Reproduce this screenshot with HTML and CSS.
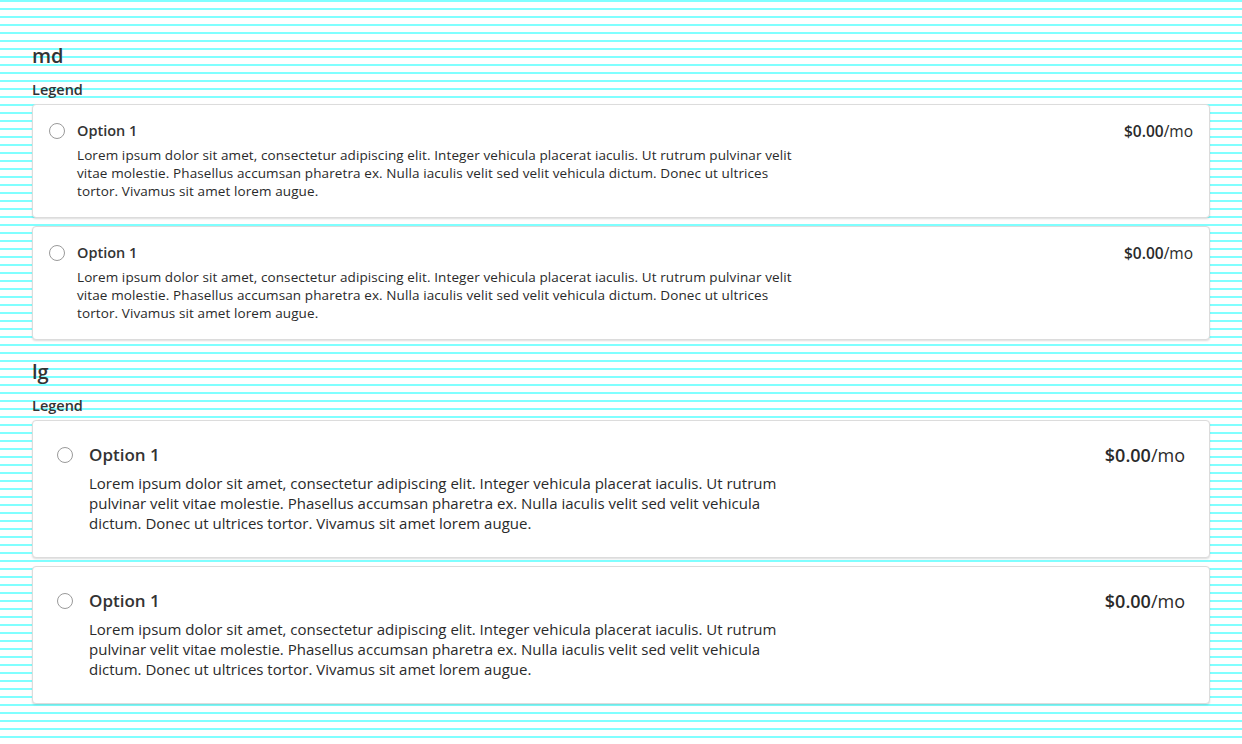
FILE: index.html
```html
<!DOCTYPE html>
<html lang="en">
<head>
<meta charset="utf-8">
<title>Radio cards</title>
<link rel="stylesheet" href="styles.css">
</head>
<body>
<main class="page">
  <section class="group group-md">
    <h2 class="size-title">md</h2>
    <div class="legend">Legend</div>
    <div class="cards">
      <label class="card">
        <span class="radio"></span>
        <span class="body">
          <span class="title">Option 1</span>
          <span class="desc">Lorem ipsum dolor sit amet, consectetur adipiscing elit. Integer vehicula placerat iaculis. Ut rutrum pulvinar velit vitae molestie. Phasellus accumsan pharetra ex. Nulla iaculis velit sed velit vehicula dictum. Donec ut ultrices tortor. Vivamus sit amet lorem augue.</span>
        </span>
        <span class="price"><b>$0.00</b>/mo</span>
      </label>
      <label class="card">
        <span class="radio"></span>
        <span class="body">
          <span class="title">Option 1</span>
          <span class="desc">Lorem ipsum dolor sit amet, consectetur adipiscing elit. Integer vehicula placerat iaculis. Ut rutrum pulvinar velit vitae molestie. Phasellus accumsan pharetra ex. Nulla iaculis velit sed velit vehicula dictum. Donec ut ultrices tortor. Vivamus sit amet lorem augue.</span>
        </span>
        <span class="price"><b>$0.00</b>/mo</span>
      </label>
    </div>
  </section>
  <section class="group group-lg">
    <h2 class="size-title">lg</h2>
    <div class="legend">Legend</div>
    <div class="cards">
      <label class="card">
        <span class="radio"></span>
        <span class="body">
          <span class="title">Option 1</span>
          <span class="desc">Lorem ipsum dolor sit amet, consectetur adipiscing elit. Integer vehicula placerat iaculis. Ut rutrum pulvinar velit vitae molestie. Phasellus accumsan pharetra ex. Nulla iaculis velit sed velit vehicula dictum. Donec ut ultrices tortor. Vivamus sit amet lorem augue.</span>
        </span>
        <span class="price"><b>$0.00</b>/mo</span>
      </label>
      <label class="card">
        <span class="radio"></span>
        <span class="body">
          <span class="title">Option 1</span>
          <span class="desc">Lorem ipsum dolor sit amet, consectetur adipiscing elit. Integer vehicula placerat iaculis. Ut rutrum pulvinar velit vitae molestie. Phasellus accumsan pharetra ex. Nulla iaculis velit sed velit vehicula dictum. Donec ut ultrices tortor. Vivamus sit amet lorem augue.</span>
        </span>
        <span class="price"><b>$0.00</b>/mo</span>
      </label>
    </div>
  </section>
</main>
</body>
</html>
```
FILE: styles.css
```css
html, body {
  margin: 0;
  padding: 0;
}
body {
  font-family: "Open Sans", "Liberation Sans", sans-serif;
  color: #2a2a2a;
  background-color: #fff;
  background-image: repeating-linear-gradient(to bottom, #80ffff 0, #80ffff 2px, #ffffff 2px, #ffffff 8px);
  min-height: 744px;
}
.page {
  padding: 44px 32px 0;
}
.group-lg {
  margin-top: 20px;
}
.size-title {
  margin: 0;
  font-size: 20px;
  line-height: 24px;
  font-weight: 600;
  color: #333;
}
.legend {
  margin-top: 12px;
  margin-bottom: 4px;
  font-size: 14.5px;
  line-height: 20px;
  font-weight: 600;
  color: #333;
}
.cards {
  display: flex;
  flex-direction: column;
  gap: 8px;
}
.card {
  display: flex;
  align-items: flex-start;
  background: #fff;
  border: 1px solid #dcdcdc;
  border-radius: 4px;
  box-shadow: 0 1px 2px rgba(0, 0, 0, 0.14);
  padding: 16px 16px 17px;
  gap: 12px;
}
.radio {
  flex: 0 0 auto;
  width: 16px;
  height: 16px;
  box-sizing: border-box;
  border: 1px solid #9a9a9a;
  border-radius: 50%;
  background: #fff;
  margin-top: 2px;
}
.body {
  flex: 1 1 auto;
  display: flex;
  flex-direction: column;
  gap: 5px;
}
.title {
  font-size: 14.5px;
  line-height: 20px;
  font-weight: 600;
  color: #333;
}
.desc {
  max-width: 722px;
  font-size: 13.5px;
  letter-spacing: 0.1px;
  line-height: 18px;
}
.price {
  flex: 0 0 auto;
  font-size: 15.5px;
  line-height: 20px;
}
.price b {
  font-weight: 600;
}
.group-lg .card {
  padding: 24px;
  gap: 16px;
}
.group-lg .title {
  font-size: 17px;
  line-height: 20px;
}
.group-lg .body {
  gap: 8px;
}
.group-lg .desc {
  max-width: 692px;
  font-size: 15px;
  letter-spacing: 0;
  line-height: 20px;
}
.group-lg .price {
  font-size: 18px;
}
.group-lg .radio {
  margin-top: 2px;
}
```
